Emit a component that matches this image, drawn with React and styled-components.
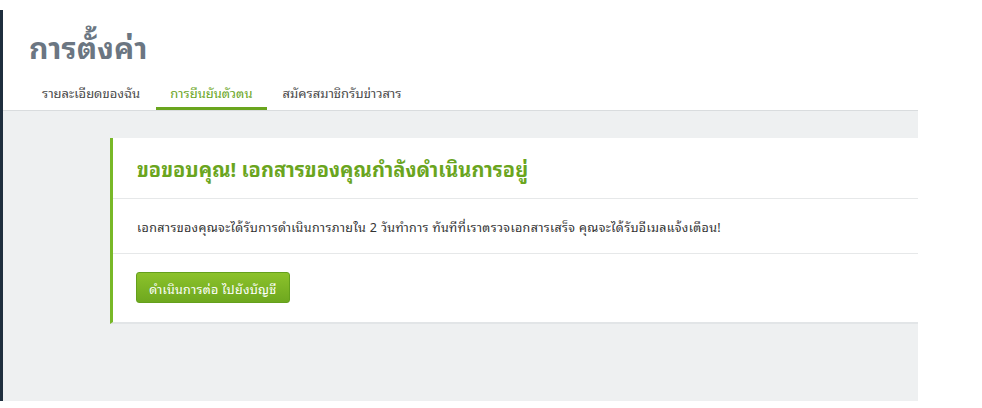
import React from 'react'
import styled, { createGlobalStyle } from 'styled-components';

const GlobalStyle = createGlobalStyle`
  body {
    margin: 0;
    background: #ffffff;
    font-family: Tahoma, "Noto Sans Thai Looped", "Loma", "Garuda", "Noto Sans Thai", "Noto Sans", sans-serif;
  }
`;

const Shell = styled.div`
  margin-top: 10px;
  width: 915px;
  height: 391px;
  border-left: 3px solid #1f2e3e;
  display: flex;
  flex-direction: column;
`;

const Header = styled.div`
  padding: 14px 0 0 25px;
  background: #ffffff;
`;

const Title = styled.h1`
  margin: 0 0 0 1px;
  font-size: 30px;
  line-height: 44px;
  font-weight: 700;
  letter-spacing: 0.2px;
  color: #6b7682;
`;

const Tabs = styled.div`
  display: flex;
  gap: 2px;
  margin-top: 10px;
`;

const Tab = styled.div`
  padding: 0 14px;
  height: 32px;
  font-size: 13px;
  line-height: 30px;
  color: ${p => (p.$active ? '#6aa51e' : '#4a4a4a')};
  border-bottom: 3px solid ${p => (p.$active ? '#6aa51e' : 'transparent')};
  box-sizing: border-box;
`;

const Content = styled.div`
  flex: 1;
  background: #eef0f1;
  border-top: 1px solid #d9dcde;
  padding: 27px 0 0 107px;
`;

const Card = styled.div`
  background: #ffffff;
  border-left: 3px solid #78b828;
  border-bottom: 2px solid #e2e5e7;
`;

const CardHeader = styled.div`
  height: 60px;
  padding: 0 24px;
  display: flex;
  align-items: center;
  border-bottom: 1px solid #e6e8e9;
`;

const CardTitle = styled.h2`
  margin: 0;
  font-size: 20px;
  font-weight: 700;
  color: #6aa51e;
`;

const CardBody = styled.div`
  height: 54px;
  padding: 0 24px;
  display: flex;
  align-items: center;
  border-bottom: 1px solid #e6e8e9;
  font-size: 12.5px;
  letter-spacing: 0.35px;
  color: #333333;
`;

const CardFooter = styled.div`
  display: flex;
  padding: 18px 23px 19px;
`;

const Button = styled.button`
  height: 31px;
  width: 154px;
  padding: 0;
  border: 1px solid #64a01c;
  border-radius: 3px;
  background: linear-gradient(#8cc22b, #6ea81f);
  color: #ffffff;
  font-family: inherit;
  font-size: 12.5px;
  letter-spacing: 0.3px;
  cursor: pointer;
`;

export default function App() {
  return (
    <>
      <GlobalStyle />
      <Shell>
        <Header>
          <Title>การตั้งค่า</Title>
          <Tabs>
            <Tab>รายละเอียดของฉัน</Tab>
            <Tab $active>การยืนยันตัวตน</Tab>
            <Tab>สมัครสมาชิกรับข่าวสาร</Tab>
          </Tabs>
        </Header>
        <Content>
          <Card>
            <CardHeader>
              <CardTitle>ขอขอบคุณ! เอกสารของคุณกำลังดำเนินการอยู่</CardTitle>
            </CardHeader>
            <CardBody>
              เอกสารของคุณจะได้รับการดำเนินการภายใน 2 วันทำการ ทันทีที่เราตรวจเอกสารเสร็จ คุณจะได้รับอีเมลแจ้งเตือน!
            </CardBody>
            <CardFooter>
              <Button>ดำเนินการต่อ ไปยังบัญชี</Button>
            </CardFooter>
          </Card>
        </Content>
      </Shell>
    </>
  )
}
